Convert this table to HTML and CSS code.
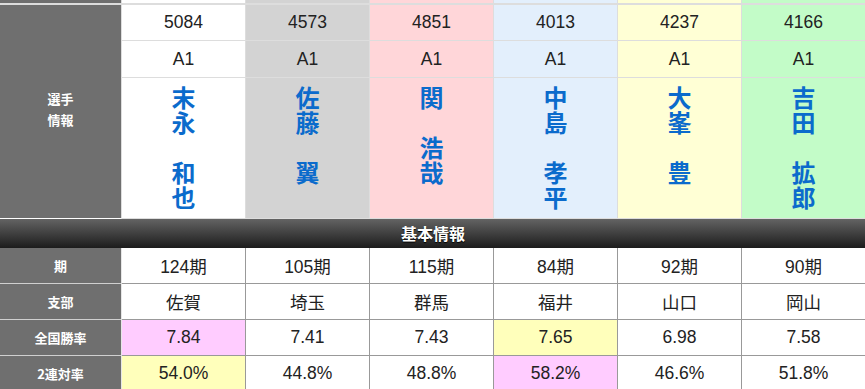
FILE: index.html
```html
<!DOCTYPE html>
<html lang="ja">
<head>
<meta charset="utf-8">
<title>選手情報</title>
<link rel="stylesheet" href="styles.css">
</head>
<body>
<div class="sheet">
  <section class="racers">
    <div class="cell label prev"></div>
    <div class="cell prev c1"></div>
    <div class="cell prev c2"></div>
    <div class="cell prev c3"></div>
    <div class="cell prev c4"></div>
    <div class="cell prev c5"></div>
    <div class="cell prev c6"></div>

    <div class="cell label info">選手<br>情報</div>
    <div class="cell num c1">5084</div>
    <div class="cell num c2">4573</div>
    <div class="cell num c3">4851</div>
    <div class="cell num c4">4013</div>
    <div class="cell num c5">4237</div>
    <div class="cell num c6">4166</div>

    <div class="cell grade c1">A1</div>
    <div class="cell grade c2">A1</div>
    <div class="cell grade c3">A1</div>
    <div class="cell grade c4">A1</div>
    <div class="cell grade c5">A1</div>
    <div class="cell grade c6">A1</div>

    <div class="cell name c1"><span>末<br>永<br><br>和<br>也</span></div>
    <div class="cell name c2"><span>佐<br>藤<br><br>翼</span></div>
    <div class="cell name c3"><span>関<br><br>浩<br>哉</span></div>
    <div class="cell name c4"><span>中<br>島<br><br>孝<br>平</span></div>
    <div class="cell name c5"><span>大<br>峯<br><br>豊</span></div>
    <div class="cell name c6"><span>吉<br>田<br><br>拡<br>郎</span></div>
  </section>

  <h2 class="section-title">基本情報</h2>

  <section class="basics">
    <div class="cell label">期</div>
    <div class="cell data">124期</div>
    <div class="cell data">105期</div>
    <div class="cell data">115期</div>
    <div class="cell data">84期</div>
    <div class="cell data">92期</div>
    <div class="cell data">90期</div>

    <div class="cell label">支部</div>
    <div class="cell data">佐賀</div>
    <div class="cell data">埼玉</div>
    <div class="cell data">群馬</div>
    <div class="cell data">福井</div>
    <div class="cell data">山口</div>
    <div class="cell data">岡山</div>

    <div class="cell label">全国勝率</div>
    <div class="cell data best">7.84</div>
    <div class="cell data">7.41</div>
    <div class="cell data">7.43</div>
    <div class="cell data second">7.65</div>
    <div class="cell data">6.98</div>
    <div class="cell data">7.58</div>

    <div class="cell label">2連対率</div>
    <div class="cell data second">54.0%</div>
    <div class="cell data">44.8%</div>
    <div class="cell data">48.8%</div>
    <div class="cell data best">58.2%</div>
    <div class="cell data">46.6%</div>
    <div class="cell data">51.8%</div>
  </section>
</div>
</body>
</html>
```

FILE: styles.css
```css
html, body {
  margin: 0;
  padding: 0;
  background: #fff;
  overflow: hidden;
}

.sheet {
  width: 866px;
  font-family: "Liberation Sans", "Noto Sans CJK JP", sans-serif;
  color: #222;
}

.racers,
.basics {
  display: grid;
  grid-template-columns: 122px repeat(6, 124px);
}

.cell {
  box-sizing: border-box;
  display: flex;
  align-items: center;
  justify-content: center;
  text-align: center;
}

.racers .cell {
  border-right: 1px solid #ddd;
  border-bottom: 1px solid #ddd;
}

.label {
  background: #6f6f6f;
  color: #fff;
  font-weight: bold;
  font-size: 13px;
  line-height: 21px;
  font-family: "Noto Sans CJK JP", sans-serif;
}

.prev {
  height: 5px;
  border-bottom-width: 2px !important;
}

.info {
  grid-row: span 3;
  padding-bottom: 5px;
  border-bottom-color: #fff !important;
}

.c1 { background: #ffffff; }
.c2 { background: #d3d3d3; }
.c3 { background: #ffd6d9; }
.c4 { background: #e3effc; }
.c5 { background: #ffffd5; }
.c6 { background: #c3fcc8; }

.num {
  height: 36px;
  font-size: 17.5px;
}

.grade {
  height: 37px;
  font-size: 17.5px;
}

.name {
  height: 141px;
  align-items: flex-start;
  padding-top: 6px;
}

.name span {
  color: #0b6bcc;
  font-family: "Noto Sans CJK JP", sans-serif;
  font-weight: bold;
  font-size: 24px;
  line-height: 25px;
}

.section-title {
  margin: 0;
  height: 29px;
  background: linear-gradient(#636363, #1c1c1c);
  color: #fff;
  font-family: "Noto Sans CJK JP", sans-serif;
  font-size: 16px;
  font-weight: bold;
  line-height: 29px;
  text-align: center;
  text-shadow: 0 1px 1px #000;
}

.basics .cell {
  height: 36px;
  border-right: 1px solid #999;
  border-bottom: 1px solid #999;
}

.basics .label {
  border-right-color: #e6e6e6;
  border-bottom-color: #d0d0d0;
}

.data {
  font-size: 17.5px;
}

.best { background: #ffccff; }
.second { background: #ffffbb; }
```
